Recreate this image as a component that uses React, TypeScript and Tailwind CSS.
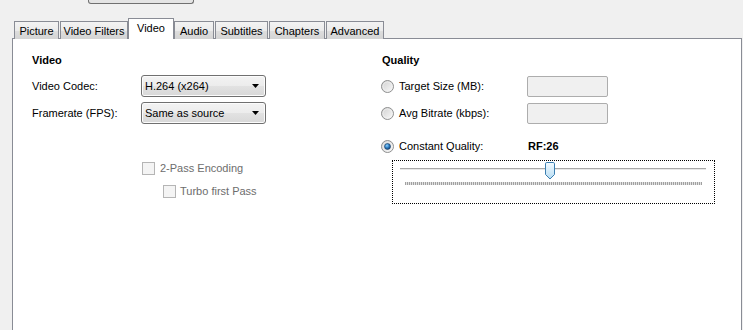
import React from "react";

function Radio({ checked }: { checked?: boolean }) {
  return (
    <svg width="13" height="13" viewBox="0 0 13 13" className="shrink-0">
      <defs>
        <linearGradient id={checked ? "rgc" : "rgu"} x1="0" y1="0" x2="1" y2="1">
          <stop offset="0" stopColor="#cfcfcf" />
          <stop offset="1" stopColor="#fbfbfb" />
        </linearGradient>
        <radialGradient id="dot" cx="0.4" cy="0.35" r="0.7">
          <stop offset="0" stopColor="#8fd3ff" />
          <stop offset="0.5" stopColor="#2f7fc4" />
          <stop offset="1" stopColor="#0f3d6e" />
        </radialGradient>
      </defs>
      <circle cx="6.5" cy="6.5" r="6" fill={`url(#${checked ? "rgc" : "rgu"})`} stroke="#8e8f8f" />
      <circle cx="6.5" cy="6.5" r="4.5" fill="none" stroke="#f4f4f4" strokeOpacity="0.6" />
      {checked && <circle cx="6.5" cy="6.5" r="3" fill="url(#dot)" stroke="#1c3f66" strokeWidth="0.6" />}
    </svg>
  );
}

function Checkbox() {
  return <div className="w-[13px] h-[13px] shrink-0 border border-[#b5b5b5] bg-[#f4f4f4]" />;
}

function Combo({ text }: { text: string }) {
  return (
    <div className="w-[125px] h-[22px] rounded-[3px] border border-[#707070] bg-[linear-gradient(#f3f3f3,#ececec_50%,#e2e2e2_50%,#d8d8d8)] shadow-[inset_0_0_0_1px_#fcfcfc] flex items-center pl-[3px] pr-[6px]">
      <span className="flex-1">{text}</span>
      <svg width="7" height="4" viewBox="0 0 7 4">
        <polygon points="0,0 7,0 3.5,4" fill="#000" />
      </svg>
    </div>
  );
}

function Tab({ label, cls }: { label: string; cls: string }) {
  return (
    <div
      className={`h-[18px] border border-b-0 border-[#898c95] bg-[linear-gradient(#f3f3f3,#ebebeb_50%,#dedede_50%,#d4d4d4)] flex items-center justify-center pt-px ${cls}`}
    >
      {label}
    </div>
  );
}

export default function App() {
  return (
    <div className="w-[743px] h-[330px] overflow-hidden bg-[#f0f0f0] text-[11px] leading-[13px] text-black font-['Liberation_Sans',Arial,sans-serif]">
      {/* cut-off button at top */}
      <div className="ml-[88px] w-[106px] h-[4px] border-x border-b border-[#707070] rounded-b-[3px] bg-[#e4e4e4]" />

      {/* tabs */}
      <div className="mt-[14px] h-[21px] flex items-end -mb-px relative z-10">
        <Tab label="Picture" cls="ml-[14px] w-[45px]" />
        <Tab label="Video Filters" cls="ml-px w-[68px]" />
        <div className="w-[46px] h-[21px] border border-b-0 border-[#898c95] bg-white flex items-start justify-center pt-[3px]">
          Video
        </div>
        <Tab label="Audio" cls="w-[40px]" />
        <Tab label="Subtitles" cls="ml-px w-[53px]" />
        <Tab label="Chapters" cls="ml-px w-[56px]" />
        <Tab label="Advanced" cls="ml-px w-[58px]" />
      </div>

      {/* panel */}
      <div className="ml-[12px] w-[730px] h-[300px] border border-[#898c95] bg-white flex pl-[19px] pt-[15px]">
        {/* left column */}
        <div className="w-[349px] flex flex-col">
          <div className="h-[13px] font-bold">Video</div>
          <div className="mt-[8px] h-[22px] flex items-center">
            <span className="w-[109px]">Video Codec:</span>
            <Combo text="H.264 (x264)" />
          </div>
          <div className="mt-[5px] h-[22px] flex items-center">
            <span className="w-[109px]">Framerate (FPS):</span>
            <Combo text="Same as source" />
          </div>
          <div className="mt-[38px] h-[13px] flex items-center ml-[110px] text-[#6d6d6d]">
            <Checkbox />
            <span className="ml-[5px]">2-Pass Encoding</span>
          </div>
          <div className="mt-[10px] h-[13px] flex items-center ml-[131px] text-[#6d6d6d]">
            <Checkbox />
            <span className="ml-[4px]">Turbo first Pass</span>
          </div>
        </div>

        {/* right column */}
        <div className="flex flex-col">
          <div className="h-[13px] font-bold pl-px">Quality</div>
          <div className="mt-[9px] h-[21px] flex items-center">
            <div className="w-[146px] flex items-center">
              <Radio />
              <span className="ml-[5px]">Target Size (MB):</span>
            </div>
            <div className="w-[81px] h-[21px] rounded-[2px] border border-[#adadad] bg-[#f0f0f0]" />
          </div>
          <div className="mt-[6px] h-[21px] flex items-center">
            <div className="w-[146px] flex items-center">
              <Radio />
              <span className="ml-[5px]">Avg Bitrate (kbps):</span>
            </div>
            <div className="w-[81px] h-[21px] rounded-[2px] border border-[#adadad] bg-[#f0f0f0]" />
          </div>
          <div className="mt-[16px] h-[13px] flex items-center">
            <div className="w-[147px] flex items-center">
              <Radio checked />
              <span className="ml-[5px]">Constant Quality:</span>
            </div>
            <span className="font-bold">RF:26</span>
          </div>
          <div className="mt-[7px] ml-[11px] w-[323px] h-[44px] border border-dotted border-black relative">
            <div className="absolute left-[7px] top-[7px] w-[306px] h-[2px] border-t border-[#a8a8a8] bg-[#e8e8e8]" />
            <div className="absolute left-[12px] top-[21px] w-[297px] h-[3px] bg-[repeating-linear-gradient(90deg,#a0a0a0_0_1px,#e2e2e2_1px_2px)]" />
            <svg className="absolute left-[152px] top-[1px]" width="10" height="18" viewBox="0 0 10 18">
              <defs>
                <linearGradient id="th" x1="0" y1="0" x2="0" y2="1">
                  <stop offset="0" stopColor="#f4fbff" />
                  <stop offset="1" stopColor="#b6dcf3" />
                </linearGradient>
              </defs>
              <path
                d="M1.8 0.5 H8.2 Q9.5 0.5 9.5 1.8 V12.5 L5 17 L0.5 12.5 V1.8 Q0.5 0.5 1.8 0.5 Z"
                fill="url(#th)"
                stroke="#3c7fb1"
              />
            </svg>
          </div>
        </div>
      </div>
    </div>
  );
}
